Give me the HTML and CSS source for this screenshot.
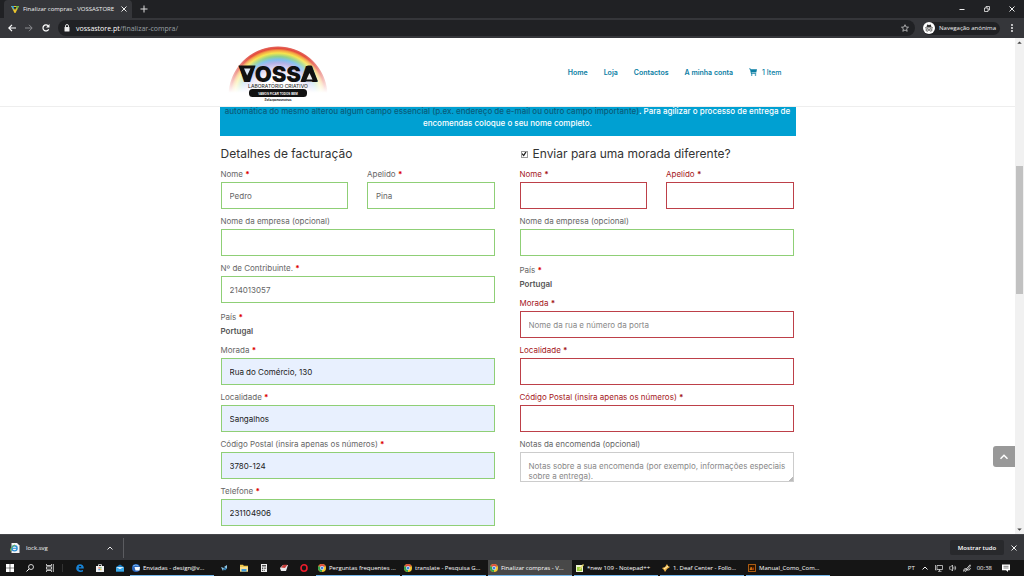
FILE: index.html
```html
<!DOCTYPE html>
<html lang="pt">
<head>
<meta charset="utf-8">
<title>Finalizar compras - VOSSASTORE</title>
<link rel="stylesheet" href="styles.css">
</head>
<body>
<svg class="defs" aria-hidden="true">
  <symbol id="chrome" viewBox="0 0 16 16"><circle cx="8" cy="8" r="8" fill="#f3c62f"/><path d="M8 8L1.100 4A8 8 0 0 1 14.900 4Z" fill="#dd4b3e"/><path d="M8 8L1.100 4A8 8 0 0 0 8 16Z" fill="#32a350"/><circle cx="8" cy="8" r="4" fill="#fff"/><circle cx="8" cy="8" r="3" fill="#4285d8"/></symbol>
  <symbol id="close" viewBox="0 0 8 8"><path d="M1.500 1.500l5 5M6.500 1.500l-5 5" stroke="currentColor" fill="none"/></symbol>
  <symbol id="up" viewBox="0 0 8 8"><path d="M1.500 5.500L4 3l2.500 2.500" stroke="currentColor" fill="none"/></symbol>
</svg>

<div class="tabstrip">
  <div class="tab">
    <svg class="icon8" viewBox="0 0 8 8"><path d="M0 1h8L4.500 8h-1z" fill="#e9c52e"/><path d="M0 1h3v4z" fill="#37a4dc"/><path d="M5 1h3L6 5z" fill="#63b44b"/><path d="M2.500 2h3L4 5z" fill="#202124"/></svg>
    <span class="tab-title">Finalizar compras - VOSSASTORE</span>
    <button class="plain" aria-label="Fechar separador"><svg class="icon8"><use href="#close"/></svg></button>
  </div>
  <button class="plain new-tab" aria-label="Novo separador"><svg class="icon8" viewBox="0 0 8 8"><path d="M4 .5v7M.5 4h7" stroke="#ddd"/></svg></button>
  <div class="window-buttons">
    <button class="plain" aria-label="Minimizar"><svg class="icon8" viewBox="0 0 8 8"><path d="M1.500 4.500h5" stroke="#eee"/></svg></button>
    <button class="plain" aria-label="Restaurar"><svg class="icon8" viewBox="0 0 8 8"><path d="M1.500 3h3.500v3.500H1.500zM3 3V1.500h3.500V5H5" stroke="#eee" stroke-width=".8" fill="none"/></svg></button>
    <button class="plain" aria-label="Fechar"><svg class="icon8"><use href="#close"/></svg></button>
  </div>
</div>

<div class="toolbar">
  <div class="history">
    <button class="plain" aria-label="Retroceder"><svg class="icon8" viewBox="0 0 8 8"><path d="M8 4H1M4 .8L.8 4 4 7.200" stroke="#fff" fill="none" stroke-width="1.200"/></svg></button>
    <button class="plain" aria-label="Avançar"><svg class="icon8" viewBox="0 0 8 8"><path d="M0 4h7M4 .8L7.200 4 4 7.200" stroke="#8c8d90" fill="none"/></svg></button>
    <button class="plain" aria-label="Recarregar"><svg class="icon8" viewBox="0 0 8 8"><path d="M6.700 5.200A3 3 0 1 1 6.200 1.900" stroke="#fff" fill="none" stroke-width="1.200"/><path d="M7.500 0v3.500H4z" fill="#fff"/></svg></button>
  </div>
  <div class="address">
    <svg class="icon8" viewBox="0 0 8 8"><rect x="1.500" y="3" width="5" height="4.500" rx=".5" fill="#eee"/><path d="M2.500 3V2a1.500 1.500 0 0 1 3 0v1" stroke="#eee" fill="none" stroke-width=".9"/></svg>
    <span class="url"><b>vossastore.pt</b>/finalizar-compra/</span>
    <svg class="icon8" viewBox="0 0 8 8"><path d="M4 .7l1 2.300 2.500.2-1.900 1.600.6 2.500L4 6 1.800 7.300l.6-2.500L.5 3.200 3 3z" stroke="#ddd" stroke-width=".7" fill="none"/></svg>
  </div>
  <div class="incognito">
    <svg class="avatar" viewBox="0 0 12 12"><circle cx="6" cy="6" r="6" fill="#fff"/><path d="M2 5.500h8v.8H2zM3.500 5l.7-2.500L6 3l1.800-.5.7 2.500z" fill="#333"/><circle cx="4.200" cy="8" r="1.200" fill="none" stroke="#333" stroke-width=".7"/><circle cx="7.800" cy="8" r="1.200" fill="none" stroke="#333" stroke-width=".7"/><path d="M5.400 7.800h1.200" stroke="#333" stroke-width=".6"/></svg>
    <span>Navegação anónima</span>
  </div>
  <button class="plain" aria-label="Menu"><svg class="icon8" viewBox="0 0 8 8" fill="#fff"><circle cx="4" cy="1" r=".9"/><circle cx="4" cy="4" r=".9"/><circle cx="4" cy="7" r=".9"/></svg></button>
</div>

<div class="viewport">
  <div class="page">
    <header class="site-header">
      <div class="container header-row">
        <a href="#" class="logo" aria-label="Vossa">
          <svg viewBox="0 0 104 62" width="104" height="62">
            <defs>
              <radialGradient id="bow" gradientUnits="userSpaceOnUse" cx="50" cy="55" r="50">
                <stop offset=".38" stop-color="#fff"/><stop offset=".52" stop-color="#dccff0"/><stop offset=".66" stop-color="#a3a0e2"/><stop offset=".73" stop-color="#6fb9ea"/><stop offset=".79" stop-color="#8fd08a"/><stop offset=".86" stop-color="#f6e64e"/><stop offset=".91" stop-color="#f4a545"/><stop offset=".95" stop-color="#e4483c"/><stop offset=".98" stop-color="#e2645a"/><stop offset="1" stop-color="#fff"/>
              </radialGradient>
              <linearGradient id="fade" x1="0" y1="0" x2="0" y2="1"><stop offset=".2" stop-color="#fff" stop-opacity="0"/><stop offset=".9" stop-color="#fff"/></linearGradient>
            </defs>
            <path d="M0 55a50 50 0 0 1 100 0z" fill="url(#bow)"/>
            <rect x="0" y="5" width="104" height="52" fill="url(#fade)"/>
            <text class="logo-name" x="50" y="40.500" text-anchor="middle">VOSSA</text>
            <path d="M10.500 24.500H27.500L20.500 40.500h-3.500z" fill="#111"/><path d="M16 27.500h6.500l-3.300 7z" fill="#dce6f4"/>
            <path d="M72.500 40.500L79.500 24.500h4L90 40.500z" fill="#111"/><path d="M78.500 38.500h6l-3-6.500z" fill="#eee"/>
            <text class="logo-sub" x="50" y="46.500" text-anchor="middle">LABORATÓRIO CRIATIVO</text>
            <rect x="21" y="48" width="58" height="8" rx="3.500" fill="#111"/>
            <text class="logo-pill" x="50" y="53.500" text-anchor="middle">VAMOS FICAR TODOS BEM</text>
            <text class="logo-tag" x="50" y="60" text-anchor="middle">#ofazponosnotras</text>
          </svg>
        </a>
        <nav class="menu">
          <a href="#">Home</a><a href="#">Loja</a><a href="#">Contactos</a><a href="#">A minha conta</a>
          <a href="#" class="cart"><svg class="icon8" viewBox="0 0 8 8"><path d="M0 .5h1.500l.3.800H8L7.300 4.500H2.500l.2.700h4.500v.8H2L1 1.200H0z" fill="currentColor"/><circle cx="2.700" cy="7" r=".8" fill="currentColor"/><circle cx="6.500" cy="7" r=".8" fill="currentColor"/></svg>1 Item</a>
        </nav>
      </div>
    </header>

    <main class="container">
      <div class="notice"><p><span class="dim">automática do mesmo alterou algum campo essencial (p.ex. endereço de e-mail ou outro campo importante)</span>. Para agilizar o processo de entrega de<br>encomendas coloque o seu nome completo.</p></div>

      <form class="checkout">
        <section class="column">
          <h3>Detalhes de facturação</h3>
          <div class="pair">
            <div class="field"><label for="b-nome">Nome <i>*</i></label><input id="b-nome" value="Pedro"></div>
            <div class="field"><label for="b-apelido">Apelido <i>*</i></label><input id="b-apelido" value="Pina"></div>
          </div>
          <div class="field"><label for="b-empresa">Nome da empresa (opcional)</label><input id="b-empresa"></div>
          <div class="field"><label for="b-nif">Nº de Contribuinte. <i>*</i></label><input id="b-nif" value="214013057"></div>
          <div class="country"><span>País <i>*</i></span><strong>Portugal</strong></div>
          <div class="field filled"><label for="b-morada">Morada <i>*</i></label><input id="b-morada" value="Rua do Comércio, 130"></div>
          <div class="field filled"><label for="b-local">Localidade <i>*</i></label><input id="b-local" value="Sangalhos"></div>
          <div class="field filled"><label for="b-cp">Código Postal (insira apenas os números) <i>*</i></label><input id="b-cp" value="3780-124"></div>
          <div class="field filled"><label for="b-tel">Telefone <i>*</i></label><input id="b-tel" value="231104906"></div>
        </section>
        <section class="column">
          <h3><label class="ship"><input type="checkbox" checked>Enviar para uma morada diferente?</label></h3>
          <div class="pair">
            <div class="field invalid"><label for="s-nome">Nome <i>*</i></label><input id="s-nome"></div>
            <div class="field invalid"><label for="s-apelido">Apelido <i>*</i></label><input id="s-apelido"></div>
          </div>
          <div class="field"><label for="s-empresa">Nome da empresa (opcional)</label><input id="s-empresa"></div>
          <div class="country"><span>País <i>*</i></span><strong>Portugal</strong></div>
          <div class="field invalid"><label for="s-morada">Morada <i>*</i></label><input id="s-morada" placeholder="Nome da rua e número da porta"></div>
          <div class="field invalid"><label for="s-local">Localidade <i>*</i></label><input id="s-local"></div>
          <div class="field invalid"><label for="s-cp">Código Postal (insira apenas os números) <i>*</i></label><input id="s-cp"></div>
          <div class="field"><label for="notas">Notas da encomenda (opcional)</label><textarea id="notas" placeholder="Notas sobre a sua encomenda (por exemplo, informações especiais sobre a entrega)."></textarea></div>
        </section>
      </form>
    </main>
    <button class="to-top" aria-label="Voltar ao topo"><svg viewBox="0 0 10 10" width="10" height="10"><path d="M1.500 6.800L5 3.300l3.500 3.500" stroke="#fff" stroke-width="1.500" fill="none"/></svg></button>
  </div>
  <div class="scrollbar">
    <svg viewBox="0 0 8 8"><path d="M2 5h4L4 3z" fill="#444"/></svg>
    <div class="track"><div class="thumb"></div></div>
    <svg viewBox="0 0 8 8"><path d="M2 3h4L4 5z" fill="#444"/></svg>
  </div>
</div>

<div class="downloads">
  <div class="download">
    <svg class="icon10" viewBox="0 0 10 10"><path d="M1.500 0H7l2.500 2.500V10h-8z" fill="#f4f4f4"/><circle cx="4.500" cy="5.300" r="2.600" fill="none" stroke="#2b8fd4" stroke-width="1.400"/><path d="M2 5.300h5" stroke="#2b8fd4"/><path d="M0 8.500Q1 3 5 2" stroke="#6dbb45" fill="none"/></svg>
    <span>lock.svg</span>
    <button class="plain" aria-label="Opções"><svg class="icon8"><use href="#up"/></svg></button>
  </div>
  <button class="show-all">Mostrar tudo</button>
  <button class="plain" aria-label="Fechar transferências"><svg class="icon8"><use href="#close"/></svg></button>
</div>

<div class="taskbar">
  <div class="slots">
    <span class="slot"><svg class="icon8" viewBox="0 0 8 8"><path d="M0 0h3.700v3.700H0zM4.300 0H8v3.700H4.300zM0 4.300h3.700V8H0zM4.300 4.300H8V8H4.300z" fill="#fff"/></svg></span>
    <span class="slot"><svg class="icon8" viewBox="0 0 8 8"><circle cx="5" cy="3" r="2.500" stroke="#fff" stroke-width=".8" fill="none"/><path d="M3.200 4.800L.5 7.500" stroke="#fff"/></svg></span>
    <span class="slot"><svg class="icon8" viewBox="0 0 8 8"><path d="M.5 0v1.500h5V0M.5 8V6.500h5V8M.5 2.800h5v2.400h-5zM7.300 0v8" stroke="#eee" stroke-width=".8" fill="none"/></svg></span>
  </div>
  <div class="slots apps">
    <span class="slot"><svg class="icon8" viewBox="0 0 8 8"><path d="M.2 4C.6 1 2.300.2 4 .2c2.300 0 4 1.500 3.800 4.300H2.500C2.700 6.500 5 6.800 7 5.900V7.500C3.500 9 .0 7.200.2 4" fill="#1884d8"/><path d="M2.700 3.200h2.700C5.300 1.500 3 1.500 2.700 3.200" fill="#151515"/></svg></span>
    <span class="slot"><svg class="icon8" viewBox="0 0 8 8"><path d="M0 2h8v6H0z" fill="#f2f2f2"/><path d="M2.500 2V.6h3V2" stroke="#eee" stroke-width=".8" fill="none"/><path d="M2.500 3.200h1.300v1.300H2.500z" fill="#e05030"/><path d="M4.200 3.200h1.300v1.300H4.200z" fill="#6ab04a"/><path d="M2.500 5h1.300v1.300H2.500z" fill="#3a90d8"/><path d="M4.200 5h1.300v1.300H4.200z" fill="#e8b830"/></svg></span>
    <span class="slot"><svg class="icon8" viewBox="0 0 8 8"><path d="M0 3l4-2.500L8 3v4.500H0z" fill="#1b7fc5"/><path d="M0 3h8L4 5.500z" fill="#d7effc"/><path d="M0 7.500V3.200l4 2.500 4-2.500v4.300z" fill="#39a9ea"/></svg></span>
  </div>
  <button class="task"><svg class="icon8" viewBox="0 0 8 8"><circle cx="4" cy="4" r="4" fill="#2a65bd"/><path d="M2.500 3H8l-.5 3.500H3.500z" fill="#f4f6fa"/><path d="M1 2q3-2 5.500 0" stroke="#75b6f0" fill="none"/></svg><span>Enviadas - design@v...</span></button>
  <div class="slots">
    <span class="slot"><svg class="icon8" viewBox="0 0 8 8"><path d="M1 3l3 1-1 3zM4 3l3-2v4z" fill="#8fc8e8"/><circle cx="5" cy="5" r="1.300" fill="#2d78ae"/></svg></span>
    <span class="slot"><svg class="icon8" viewBox="0 0 8 8"><path d="M0 .8h3l.8 1H8V7.500H0z" fill="#f1c84c"/><path d="M0 3h8v4.500H0z" fill="#fae191"/><path d="M1.500 5h5v2.500h-5z" fill="#3e9bdc"/></svg></span>
    <span class="slot"><svg class="icon8" viewBox="0 0 8 8"><path d="M1 0h6v8H1z" fill="#eee"/><path d="M2 1h4v1.500H2zM2 3.500h1V5H2zM3.700 3.500h1V5h-1zM5.300 3.500h.8V5h-.8zM2 5.800h1V7H2zM3.700 5.800h1V7h-1z" fill="#555"/></svg></span>
    <span class="slot"><svg class="icon8" viewBox="0 0 8 8"><path d="M0 4l3-3h5L6 7H1z" fill="#e8e8ea"/><path d="M1 3.500L3.500.8h4L5 4z" fill="#c9403c"/></svg></span>
    <span class="slot"><svg class="icon8" viewBox="0 0 8 8"><ellipse cx="4" cy="4" rx="3" ry="3.200" fill="none" stroke="#ec1c2c" stroke-width="1.600"/></svg></span>
  </div>
  <div class="tasks">
    <button class="task"><svg class="icon8"><use href="#chrome"/></svg><span>Perguntas frequentes ...</span></button>
    <button class="task"><svg class="icon8"><use href="#chrome"/></svg><span>translate - Pesquisa G...</span></button>
    <button class="task active"><svg class="icon8"><use href="#chrome"/></svg><span>Finalizar compras - V...</span></button>
    <button class="task"><svg class="icon8" viewBox="0 0 8 8"><path d="M0 1h7v7H0z" fill="#eef2d0"/><path d="M1 3h5v4H1z" fill="#9bcb3c"/><path d="M3 5l4-5 1 1-4 5z" fill="#e9dc73"/></svg><span>*new 109 - Notepad++</span></button>
    <button class="task"><svg class="icon8" viewBox="0 0 8 8"><path d="M0 4l3-1 2-3 1 2 2 1-3 2-2 3-1-2z" fill="#f1b545"/><path d="M2 5l4-3" stroke="#fff3c8"/></svg><span>1. Deaf Center - Follo...</span></button>
    <button class="task"><svg class="icon8" viewBox="0 0 8 8"><path d="M.4.4h7.200v7.200H.4z" fill="#2d1500" stroke="#e27a16" stroke-width=".8"/><text class="ai" x="1.600" y="5.700">Ai</text></svg><span>Manual_Como_Com...</span></button>
  </div>
  <div class="tray">
    <span>PT</span>
    <svg class="icon8"><use href="#up"/></svg>
    <svg class="icon8" viewBox="0 0 8 8"><path d="M2 1.500h5.500v4H2zM4.500 5.500v1.700M3 7.300h3.500M.5 1v5h1" stroke="#eee" stroke-width=".7" fill="none"/></svg>
    <svg class="icon8" viewBox="0 0 8 8"><path d="M0 3h1.500L3.500 1v6L1.500 5H0zM4.700 2.800q1 1.200 0 2.400M5.800 1.800q2 2.200 0 4.400" stroke="#eee" stroke-width=".7" fill="none"/></svg>
    <svg class="icon8" viewBox="0 0 8 8"><path d="M.5 7.500q0-3 2-3t1 2-2 .5L7 .8l.5 1L4 6q3 1 3.500-2" stroke="#eee" stroke-width=".8" fill="none"/></svg>
    <span class="clock">00:38</span>
    <svg class="icon8" viewBox="0 0 8 8"><path d="M0 .5h8v5.700H6V8L4 6.200H0z" fill="#fff"/><path d="M1.500 2.300h5M1.500 4h5" stroke="#333" stroke-width=".6"/></svg>
  </div>
</div>
</body>
</html>
```
FILE: styles.css
```css
* { box-sizing: border-box; }
body {
  margin: 0;
  height: 100vh;
  display: flex;
  flex-direction: column;
  overflow: hidden;
  background: #fff;
  font-family: Inter, "Liberation Sans", sans-serif;
  font-size: 8px;
  color: #666;
}
button, input, textarea { font: inherit; }
svg { display: block; flex: none; }
.defs { position: absolute; width: 0; height: 0; }
.icon8 { width: 8px; height: 8px; }
.icon10 { width: 10px; height: 10px; }
.plain { flex: none; border: 0; padding: 0; background: none; color: #eee; display: flex; }

/* Browser frame */
.tabstrip, .toolbar, .downloads, .taskbar {
  flex: none;
  display: flex;
  align-items: center;
  color: #f1f1f1;
  font-family: "Open Sans", "Noto Sans", sans-serif;
  font-size: 6px;
  white-space: nowrap;
}
.tabstrip { height: 18px; background: #202124; padding-left: 4px; }
.tab { flex: none; width: 128px; height: 18px; padding: 0 4px 0 7px; display: flex; align-items: center; gap: 4px; background: #35363a; border-radius: 4px 4px 0 0; }
.tab-title { flex: 1; }
.new-tab { margin-left: 8px; }
.window-buttons { margin-left: auto; display: flex; gap: 17px; padding-right: 8px; }
.toolbar { height: 20px; background: #35363a; padding: 0 8px; gap: 8px; }
.history { display: flex; gap: 9px; }
.address { flex: 1; height: 16px; padding: 0 6px 0 5px; display: flex; align-items: center; gap: 5px; border-radius: 8px; background: #202124; }
.url { flex: 1; font-size: 7px; color: #9aa0a6; }
.url b { font-weight: 400; color: #fff; }
.incognito { height: 13px; padding-right: 4px; display: flex; align-items: center; gap: 4px; border-radius: 7px; background: #202124; }
.avatar { width: 12px; height: 12px; }

/* Page */
.viewport { flex: 1; min-height: 0; display: flex; }
.page { flex: 1; position: relative; overflow: hidden; }
.container { max-width: 576px; margin: 0 auto; }
.site-header { border-bottom: 1px solid #eee; }
.header-row { height: 68px; display: flex; align-items: center; justify-content: space-between; padding: 0 14px 0 8px; }
.logo-name { font: 900 22px Inter, sans-serif; fill: #111; }
.logo-sub { font: 500 5px Inter, sans-serif; fill: #333; }
.logo-pill { font: 700 3px "Liberation Sans", sans-serif; fill: #fff; }
.logo-tag { font: 700 3px Inter, sans-serif; fill: #222; }
.menu { display: flex; gap: 16px; font-size: 7px; font-weight: 600; }
.menu a { color: #0a7ea4; text-decoration: none; }
.menu .cart { display: flex; gap: 5px; font-weight: 500; }
.notice { height: 29px; padding-bottom: 7px; display: flex; flex-direction: column; justify-content: flex-end; overflow: hidden; background: #00a0d2; color: #fff; text-align: center; font-weight: 500; line-height: 12px; }
.notice p { margin: 0; white-space: nowrap; }
.dim { color: #0a5c7a; }
.checkout { display: grid; grid-template-columns: 1fr 1fr; gap: 25px; align-items: start; padding: 10px 2px 7px 1px; }
.column { display: flex; flex-direction: column; gap: 5px; min-width: 0; }
h3 { margin: 0; font-size: 12px; line-height: 16px; font-weight: 400; color: #333; }
.ship { display: flex; align-items: center; gap: 5px; }
.ship input { appearance: none; flex: none; width: 7px; height: 7px; margin: 0 0 0 1px; border: 1px solid #999; background: #fff; display: grid; }
.ship input:checked::before { content: ""; background: #222; clip-path: polygon(0 50%, 20% 35%, 40% 60%, 80% 0, 100% 15%, 45% 100%); }
.pair { display: grid; grid-template-columns: 1fr 1fr; gap: 19px; }
.field { display: flex; flex-direction: column; min-width: 0; }
.field label { line-height: 15px; }
i { font-style: normal; font-weight: 700; color: #d00; }
.field input, .field textarea { width: 100%; margin: 0; border: 1px solid #8fcf76; border-radius: 0; background: #fff; color: #666; outline: 0; }
.field input { height: 27px; padding: 0 8px; }
.field textarea { height: 30px; padding: 8px 4px 0 8px; border-color: #ccc; line-height: 10px; resize: none; overflow: hidden; background: linear-gradient(135deg, #fff 50%, #bbb 50%) right bottom / 5px 5px no-repeat; }
::placeholder { color: #888; opacity: 1; }
.field.filled input { background: #e8f0fe; color: #222; }
.invalid label, .invalid i { color: #a5181c; }
.field.invalid input { border-color: #bd4049; }
.country { display: flex; flex-direction: column; padding-top: 2px; line-height: 14px; }
.country strong { font-weight: 600; color: #555; }
.to-top { position: absolute; right: 0; bottom: 67px; width: 22px; height: 21px; padding: 0; border: 0; border-radius: 3px 0 0 3px; background: #999; display: grid; place-items: center; }
.scrollbar { width: 9px; display: flex; flex-direction: column; background: #f1f1f1; }
.track { flex: 1; padding: 119px 1px 0; }
.thumb { height: 128px; background: #c1c1c1; }

/* Download shelf */
.downloads { height: 26px; padding: 0 6px 0 10px; background: #35363a; border-top: 1px solid #45464a; }
.download { width: 114px; height: 20px; padding-right: 9px; display: flex; align-items: center; gap: 6px; border-right: 1px solid #5b5c60; }
.download span { flex: 1; }
.show-all { margin-left: auto; margin-right: 6px; width: 54px; height: 15px; padding: 0; border: 0; border-radius: 2px; background: #28292c; color: #fff; font-weight: 600; }

/* Taskbar */
.taskbar { height: 16px; background: #151515; padding-right: 14px; }
.slots, .tasks { display: flex; align-items: center; }
.slot { width: 20px; display: grid; place-items: center; }
.apps { margin-left: 2px; padding-left: 7px; border-left: 1px solid #333; }
.task { width: 84px; height: 16px; padding: 0 0 0 2px; display: flex; align-items: center; gap: 3px; border: 0; border-bottom: 1px solid #76b9ed; background: none; color: #fff; overflow: hidden; white-space: nowrap; }
.tasks { gap: 2px; margin-left: 2px; }
.active { background: #484848; }
.ai { font: 700 4px "Liberation Sans", sans-serif; fill: #ff8a1c; }
.tray { margin-left: auto; display: flex; align-items: center; gap: 6px; }
.clock { margin-right: 4px; }
```
